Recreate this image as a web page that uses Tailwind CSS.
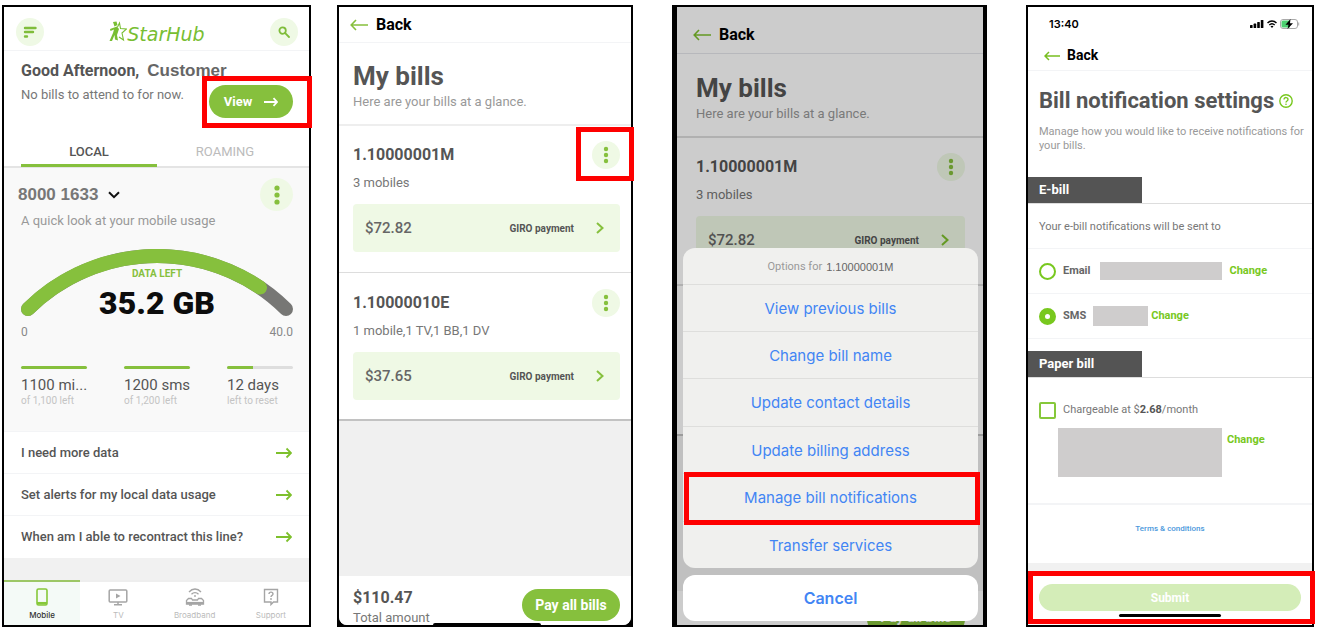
<!DOCTYPE html>
<html lang="en">
<head>
  <meta charset="UTF-8" />
  <title>StarHub App – Manage bill notifications</title>
  <meta name="viewport" content="width=device-width, initial-scale=1.0" />
  <script src="https://cdn.jsdelivr.net/npm/@tailwindcss/browser@4"></script>
</head>
<body class="bg-white font-['Roboto',sans-serif] text-[#555]">

  <main class="min-h-screen pt-[5px] pb-[5px] pl-[2px] pr-1 grid grid-cols-[309fr_26fr_296fr_39fr_315fr_39fr_288fr]">

    <!-- Step 1: Home -->
    <section class="col-start-1 border-2 border-black bg-white flex flex-col">
      <header class="h-11 pl-3 pr-[11px] pt-1.5 flex items-center justify-between border-b border-gray-100">
        <button aria-label="Menu" class="size-7 rounded-full bg-[#eff9e5] flex items-center justify-center">
          <svg class="w-[14px] h-3" viewBox="0 0 14 12" fill="none" stroke="#7fbd3a" stroke-width="2.4" stroke-linecap="round"><path d="M2 2h10.500M2 6h8M2 10.500h2" /></svg>
        </button>
        <div class="flex items-center text-[#78be32]">
          <svg class="w-[18px] h-[21px]" viewBox="0 0 18 21" fill="none" stroke="currentColor">
            <path d="M4 1l3.500-.5 1 3.500-3 1.500z" fill="currentColor" stroke="none" />
            <path d="M1 8l7-2.500L10 8l-2 6 1 5.500-3-1L5.500 14 3 20H.5L4 12 5 8.500 1.500 10z" fill="currentColor" stroke="none" />
            <path d="M8.500 6L10.500 2l1 5.500 6 .5-4.500 4 1.500 7-4.500-3" stroke-width="1.100" />
          </svg>
          <span class="pt-1 font-['DejaVu_Sans',sans-serif] italic text-[19px] leading-5">StarHub</span>
        </div>
        <button aria-label="Search" class="size-7 rounded-full bg-[#eff9e5] flex items-center justify-center">
          <svg class="size-3" viewBox="0 0 12 12" fill="none" stroke="#7fbd3a" stroke-width="1.8" stroke-linecap="round"><circle cx="4.6" cy="4.6" r="3.2" /><path d="M7.2 7.2l3.8 3.8" /></svg>
        </button>
      </header>

      <div class="pl-[17px] pr-4 pt-2">
        <h1 class="text-[16px] leading-6 font-bold flex items-center gap-2">Good Afternoon, <span class="font-['Liberation_Sans',sans-serif] text-[17px] text-[#666]">Customer</span></h1>
        <div class="flex justify-between">
          <p class="text-[13px] leading-6 text-[#777]">No bills to attend to for now.</p>
          <div class="relative mt-0.5">
            <button class="h-[33px] w-[84px] rounded-full bg-[#86c03d] text-white font-bold text-[13px] flex items-center justify-center gap-3">
              View
              <svg class="w-[14px] h-2.5" viewBox="0 0 14 10" fill="none" stroke="currentColor" stroke-width="1.8"><path d="M0 5h13M9.5 1.2L13 5 9.5 8.8" /></svg>
            </button>
            <div class="absolute -top-[9px] -bottom-[10px] -left-[7px] -right-[19px] border-[5px] border-[#fe0000]"></div>
          </div>
        </div>
      </div>

      <nav class="mt-[18px] pl-[17px] pr-4 grid grid-cols-2 border-b-2 border-[#e4e4e4] text-[13px] leading-5">
        <button class="pt-1.5 pb-0.5 -mb-px border-b-3 border-[#86c03d] font-medium">LOCAL</button>
        <button class="pt-1.5 pb-1 text-[#bbb]">ROAMING</button>
      </nav>

      <div class="bg-[#f9f9f9] pl-[17px] pr-4 pt-2.5 pb-6">
        <div class="flex items-center justify-between">
          <button class="-ml-[3px] flex items-center gap-2.5 font-['Liberation_Sans',sans-serif] font-bold text-[17px] leading-6 text-[#777]">
            8000 1633
            <svg class="w-3 h-2" viewBox="0 0 12 8" fill="none" stroke="#111" stroke-width="2"><path d="M1 1.2l5 5 5-5" /></svg>
          </button>
          <button aria-label="Line options" class="size-[33px] rounded-full bg-[#eff9e5] flex items-center justify-center">
            <svg class="w-1.5 h-5" viewBox="0 0 6 20" fill="#86c03d"><circle cx="3" cy="3" r="2.6" /><circle cx="3" cy="10" r="2.6" /><circle cx="3" cy="17" r="2.6" /></svg>
          </button>
        </div>
        <p class="text-[13px] leading-5 text-[#999]">A quick look at your mobile usage</p>

        <!-- Data gauge -->
        <div class="relative mt-[18px]">
          <svg class="w-full" viewBox="0 0 272 67" fill="none" stroke-width="14" stroke-linecap="round">
            <path d="M7 60A183.5 183.5 0 0 1 265 60" stroke="#777775" />
            <path d="M7 60A183.5 183.5 0 0 1 239 38.500" stroke="#86c03d" />
          </svg>
          <div class="absolute inset-x-0 top-[18px] text-center">
            <p class="text-[10px] leading-[14px] font-bold text-[#86c03d]">DATA LEFT</p>
            <p class="mt-1 text-[32px] leading-9 font-black text-[#0d0d0d]">35.2 GB</p>
          </div>
        </div>
        <div class="mt-1.5 flex justify-between text-[12px] leading-5 text-[#888]"><span>0</span><span>40.0</span></div>

        <div class="mt-6 grid grid-cols-3 gap-[37px] whitespace-nowrap">
          <div>
            <div class="h-[3px] rounded-full bg-[#86c03d]"></div>
            <p class="mt-1.5 text-[15px] leading-5">1100 mi...</p>
            <p class="text-[10px] leading-3 text-[#c4c4c4]">of 1,100 left</p>
          </div>
          <div>
            <div class="h-[3px] rounded-full bg-[#86c03d]"></div>
            <p class="mt-1.5 text-[15px] leading-5">1200 sms</p>
            <p class="text-[10px] leading-3 text-[#c4c4c4]">of 1,200 left</p>
          </div>
          <div>
            <div class="h-[3px] rounded-full bg-[#dedede]"><div class="h-[3px] rounded-l-full bg-[#86c03d]" style="width: 40%"></div></div>
            <p class="mt-1.5 text-[15px] leading-5">12 days</p>
            <p class="text-[10px] leading-3 text-[#c4c4c4]">left to reset</p>
          </div>
        </div>
      </div>

      <div class="text-[13px] font-medium divide-y divide-gray-100 border-t border-gray-100">
        <a href="#" class="h-[42px] pl-[17px] pr-[17px] flex items-center justify-between">I need more data
          <svg class="w-4 h-3" viewBox="0 0 16 12" fill="none" stroke="#7dc02c" stroke-width="1.8"><path d="M0 6h15M10.500 1.500L15 6l-4.500 4.500" /></svg>
        </a>
        <a href="#" class="h-[42px] pl-[17px] pr-[17px] flex items-center justify-between">Set alerts for my local data usage
          <svg class="w-4 h-3" viewBox="0 0 16 12" fill="none" stroke="#7dc02c" stroke-width="1.8"><path d="M0 6h15M10.500 1.500L15 6l-4.500 4.500" /></svg>
        </a>
        <a href="#" class="h-[42px] pl-[17px] pr-[17px] flex items-center justify-between">When am I able to recontract this line?
          <svg class="w-4 h-3" viewBox="0 0 16 12" fill="none" stroke="#7dc02c" stroke-width="1.8"><path d="M0 6h15M10.500 1.500L15 6l-4.500 4.500" /></svg>
        </a>
      </div>
      <div class="flex-1 bg-[#f1f1f1]"></div>

      <nav class="grid grid-cols-4 font-['Inter',sans-serif] text-[8px] leading-[10px] text-[#bbb]">
        <a href="#" class="h-[45px] border-t-2 border-[#9cc766] bg-[#f4faf7] flex flex-col items-center pt-1.5 gap-1 font-medium text-[#333]">
          <svg class="w-5 h-[18px]" viewBox="0 0 20 18" fill="none" stroke="#86c83a" stroke-width="1.6"><rect x="5" y="1" width="10" height="16" rx="1.500" /><path d="M5 15.200h10" stroke-width="2.500" /></svg>
          Mobile
        </a>
        <a href="#" class="h-[45px] border-t-2 border-[#eee] flex flex-col items-center pt-1.5 gap-1">
          <svg class="w-5 h-[18px]" viewBox="0 0 20 18" fill="none" stroke="#a5a5a5" stroke-width="1.500"><rect x="1.200" y="2" width="17.600" height="12" rx="1" /><path d="M10 14v2.500M6 16.800h8" /><path d="M8 5.500l4.500 2.500L8 10.500z" fill="#a5a5a5" stroke="none" /></svg>
          TV
        </a>
        <a href="#" class="h-[45px] border-t-2 border-[#eee] flex flex-col items-center pt-1.5 gap-1">
          <svg class="w-5 h-[18px]" viewBox="0 0 20 18" fill="none" stroke="#a5a5a5" stroke-width="1.300"><path d="M4 4c3.500-4 8.500-4 12 0M6.500 6.300c2-2.200 5-2.200 7 0" /><circle cx="10" cy="8" r=".9" fill="#a5a5a5" stroke="none" /><path d="M3.500 10.500h3l1 1.500h5l1-1.500h3l2 2v3.500H1.500v-3.500z" /><path d="M2 15h16" stroke-width="2.200" /><path d="M4 17h3M13 17h3" /></svg>
          Broadband
        </a>
        <a href="#" class="h-[45px] border-t-2 border-[#eee] flex flex-col items-center pt-1.5 gap-1">
          <svg class="w-5 h-[18px]" viewBox="0 0 20 18" fill="none" stroke="#a5a5a5" stroke-width="1.400"><path d="M3.500 1.500h13v12.500h-4L10 16.500V14H3.500z" /><path d="M8 6c0-2.500 4-2.500 4 0 0 1.500-2 1.300-2 3" /><circle cx="10" cy="11" r=".9" fill="#a5a5a5" stroke="none" /></svg>
          Support
        </a>
      </nav>
    </section>

    <!-- Step 2: My bills -->
    <section class="col-start-3 border-2 border-black bg-black flex flex-col">
      <div class="relative flex-1 bg-[#f0f0f0] rounded-b-lg flex flex-col">
        <div class="bg-white border-b-2 border-[#c2c2c2]">
          <a href="#" class="h-9 px-[11px] flex items-center gap-2 text-[16px] font-bold text-black border-b border-gray-100">
            <svg class="w-[18px] h-3" viewBox="0 0 18 12" fill="none" stroke="#86c03d" stroke-width="1.600"><path d="M18 6H1.500M6 1L1.200 6 6 11" /></svg>
            Back
          </a>
          <div class="pl-3.5 pt-[17px] pb-3 border-b-2 border-[#eee]">
            <h2 class="text-[26px] leading-8 font-bold">My bills</h2>
            <p class="text-[13px] leading-5 text-[#999]">Here are your bills at a glance.</p>
          </div>
          <div class="pl-3.5 pr-[11px] pt-[15px] pb-5 border-b border-[#ddd]">
            <div class="flex items-center justify-between">
              <h3 class="text-[16px] leading-7 font-bold">1.10000001M</h3>
              <div class="relative">
                <button aria-label="Options for 1.10000001M" class="size-7 rounded-full bg-[#eff9e5] flex items-center justify-center">
                  <svg class="w-1.5 h-[18px]" viewBox="0 0 6 18" fill="#86c03d"><circle cx="3" cy="3" r="2.200" /><circle cx="3" cy="9" r="2.200" /><circle cx="3" cy="15" r="2.200" /></svg>
                </button>
                <div class="absolute -top-[14px] -bottom-3 -left-4 -right-[14px] border-[5px] border-[#fe0000]"></div>
              </div>
            </div>
            <p class="mt-1 text-[13px] leading-5 text-[#777]">3 mobiles</p>
            <a href="#" class="mt-[11px] h-12 rounded px-3 bg-[#eff9e5] flex items-center">
              <span class="flex-1 text-[15px] font-medium text-[#666]">$72.82</span>
              <span class="text-[10px] font-bold">GIRO payment</span>
              <svg class="ml-[22px] mr-1 w-2 h-3" viewBox="0 0 8 12" fill="none" stroke="#86c03d" stroke-width="2"><path d="M1 1l5.500 5L1 11" /></svg>
            </a>
          </div>
          <div class="pl-3.5 pr-[11px] pt-4 pb-[19px]">
            <div class="flex items-center justify-between">
              <h3 class="text-[16px] leading-7 font-bold">1.10000010E</h3>
              <button aria-label="Options for 1.10000010E" class="size-7 rounded-full bg-[#eff9e5] flex items-center justify-center">
                <svg class="w-1.5 h-[18px]" viewBox="0 0 6 18" fill="#86c03d"><circle cx="3" cy="3" r="2.200" /><circle cx="3" cy="9" r="2.200" /><circle cx="3" cy="15" r="2.200" /></svg>
              </button>
            </div>
            <p class="mt-1 text-[13px] leading-5 text-[#777]">1 mobile,1 TV,1 BB,1 DV</p>
            <a href="#" class="mt-[11px] h-12 rounded px-3 bg-[#eff9e5] flex items-center">
              <span class="flex-1 text-[15px] font-medium text-[#666]">$37.65</span>
              <span class="text-[10px] font-bold">GIRO payment</span>
              <svg class="ml-[22px] mr-1 w-2 h-3" viewBox="0 0 8 12" fill="none" stroke="#86c03d" stroke-width="2"><path d="M1 1l5.500 5L1 11" /></svg>
            </a>
          </div>
        </div>
        <div class="flex-1"></div>
        <footer class="bg-white rounded-b-lg pl-3.5 pr-[11px] pt-3 flex items-start justify-between">
          <div class="-mb-1">
            <p class="text-[16px] leading-5 font-bold">$110.47</p>
            <p class="text-[13px] leading-5 text-[#777]">Total amount</p>
          </div>
          <button class="mt-px mb-1 h-8 w-[98px] rounded-full bg-[#86c03d] text-white text-[14px] font-bold">Pay all bills</button>
        </footer>
        <div class="absolute bottom-0 left-1/2 -ml-[52px] w-[108px] h-0.5 rounded-t bg-black"></div>
      </div>
    </section>

    <!-- Step 3: Bill options sheet -->
    <section class="col-start-5 border-y-2 border-l-5 border-r-4 border-black bg-[#f0f0f0] relative overflow-hidden">
      <div class="absolute inset-0 flex flex-col">
        <div class="bg-white border-b-2 border-[#c2c2c2]">
          <a href="#" class="h-[47px] pt-2.5 px-4 flex items-center gap-2 text-[16px] font-bold text-black border-b border-gray-200">
            <svg class="w-[18px] h-3" viewBox="0 0 18 12" fill="none" stroke="#7dc02c" stroke-width="1.600"><path d="M18 6H1.500M6 1L1.200 6 6 11" /></svg>
            Back
          </a>
          <div class="pl-[19px] pt-[18px] pb-3 border-b-2 border-[#ddd]">
            <h2 class="text-[26px] leading-8 font-bold">My bills</h2>
            <p class="text-[13px] leading-5 text-[#999]">Here are your bills at a glance.</p>
          </div>
          <div class="pl-[19px] pr-[18px] pt-[15px] pb-5 border-b-2 border-[#ddd]">
            <div class="flex items-center justify-between">
              <h3 class="text-[16px] leading-7 font-bold">1.10000001M</h3>
              <button aria-label="Options for 1.10000001M" class="size-7 rounded-full bg-[#eff9e5] flex items-center justify-center">
                <svg class="w-1.5 h-[18px]" viewBox="0 0 6 18" fill="#86c03d"><circle cx="3" cy="3" r="2.200" /><circle cx="3" cy="9" r="2.200" /><circle cx="3" cy="15" r="2.200" /></svg>
              </button>
            </div>
            <p class="mt-1 text-[13px] leading-5 text-[#777]">3 mobiles</p>
            <a href="#" class="mt-[11px] h-12 rounded px-3 bg-[#eff9e5] flex items-center">
              <span class="flex-1 text-[15px] font-medium text-[#666]">$72.82</span>
              <span class="text-[10px] font-bold">GIRO payment</span>
              <svg class="ml-[22px] mr-1 w-2 h-3" viewBox="0 0 8 12" fill="none" stroke="#7dc02c" stroke-width="2"><path d="M1 1l5.500 5L1 11" /></svg>
            </a>
          </div>
          <div class="h-[148px]"></div>
        </div>
        <div class="flex-1"></div>
        <footer class="h-[34px] bg-white pr-[18px] flex justify-end items-start overflow-hidden">
          <button class="mt-3 h-8 shrink-0 w-[98px] rounded-full bg-[#86c03d] text-white text-[14px] leading-4 font-bold flex justify-center pt-1.5">Pay all bills</button>
        </footer>
      </div>
      <div class="absolute inset-0 bg-black/20"></div>

      <div class="absolute bottom-1 left-1.5 right-[5px] font-['Inter',sans-serif] text-[15px] text-[#4285f4]">
        <div class="rounded-xl bg-[#f0f0ee] divide-y divide-[#dededc]">
          <p class="h-[37px] pt-0.5 flex items-center justify-center gap-1 font-['Roboto',sans-serif] text-[11px] text-[#999]">Options for <span class="font-['Liberation_Sans',sans-serif] text-[#666]">1.10000001M</span></p>
          <button class="block w-full h-[47px] pt-0.5">View previous bills</button>
          <button class="block w-full h-[47px] pt-0.5">Change bill name</button>
          <button class="block w-full h-[48px] pt-0.5">Update contact details</button>
          <button class="block w-full h-[47px] pt-0.5">Update billing address</button>
          <div class="relative">
            <button class="block w-full h-[47px] pt-0.5">Manage bill notifications</button>
            <div class="absolute -top-0.5 -bottom-1 left-px -right-0.5 z-10 border-[5px] border-[#fe0000]"></div>
          </div>
          <button class="block w-full h-[46px] pt-0.5">Transfer services</button>
        </div>
        <button class="mt-[7px] block w-full h-[46px] rounded-xl bg-white text-[16px] font-semibold">Cancel</button>
      </div>
    </section>

    <!-- Step 4: Bill notification settings -->
    <section class="col-start-7 border-2 border-black bg-white flex flex-col text-[11px]">
      <div class="h-8 pt-0.5 pl-[21px] pr-3 flex items-center gap-[3px] text-black">
        <span class="flex-1 font-['Inter',sans-serif] font-semibold">13:40</span>
        <svg class="w-[14px] h-2" viewBox="0 0 14 8" fill="currentColor"><rect y="5" width="2.600" height="3" rx=".6" /><rect x="3.600" y="3.600" width="2.600" height="4.400" rx=".6" /><rect x="7.200" y="2" width="2.600" height="6" rx=".6" /><rect x="10.800" width="2.600" height="8" rx=".6" /></svg>
        <svg class="w-2.5 h-2" viewBox="0 0 10 8" fill="none" stroke="currentColor" stroke-width="1.500"><path d="M.5 3c2.600-2.600 6.400-2.600 9 0M2.300 5c1.600-1.500 3.800-1.500 5.400 0" /><path d="M3.500 6.300L5 8l1.500-1.700c-.8-.7-2.200-.7-3 0z" fill="currentColor" stroke="none" /></svg>
        <svg class="w-5 h-2.5" viewBox="0 0 20 10"><rect x=".5" y=".5" width="17" height="9" rx="2.500" fill="#fff" stroke="#aaa" /><path d="M3 1.500h7v7H3a1.500 1.500 0 0 1-1.500-1.500V3A1.500 1.500 0 0 1 3 1.500z" fill="#4cd070" /><path d="M10.500 0L5.500 5.700h3L7.500 10l5.500-5.700h-3z" fill="#000" /><path d="M18.700 3.500v3" stroke="#aaa" /></svg>
      </div>
      <a href="#" class="h-8 pt-0.5 px-4 flex items-center gap-[7px] text-[14px] font-bold text-black border-b border-gray-100">
        <svg class="w-4 h-2.5" viewBox="0 0 16 10" fill="none" stroke="#78be20" stroke-width="1.500"><path d="M16 5H1.200M5 1L1 5l4 4" /></svg>
        Back
      </a>
      <div class="pl-[11px] pr-2 pt-4">
        <h2 class="text-[22px] leading-7 font-bold flex items-center gap-[5px] whitespace-nowrap">Bill notification settings
          <svg class="size-3.5" viewBox="0 0 14 14" fill="none" stroke="#78c81e" stroke-width="1.400"><circle cx="7" cy="7" r="6.200" /><path d="M5 5.600c0-2.800 4-2.600 4 0 0 1.400-2 1.400-2 2.800" /><circle cx="7" cy="10.200" r=".8" fill="#78c81e" stroke="none" /></svg>
        </h2>
        <p class="mt-2.5 leading-[14px] text-[#999]">Manage how you would like to receive notifications for your bills.</p>
      </div>

      <h3 class="mt-6 border-b border-[#ddd] text-[13px] leading-[26px] font-bold text-white"><span class="block w-2/5 pl-[11px] bg-[#545454]">E-bill</span></h3>
      <p class="h-[45px] px-[11px] pt-0.5 flex items-center text-[#777] border-b border-gray-100">Your e-bill notifications will be sent to</p>
      <div class="h-[45px] px-[11px] flex items-center border-b border-gray-100 text-[11px] font-bold text-[#666]">
        <input type="radio" name="ebill" id="email" class="appearance-none size-[17px] rounded-full border-2 border-[#78c81e] checked:border-6" />
        <label for="email" class="ml-[7px]">Email</label>
        <span class="ml-2.5 w-[122px] h-[18px] bg-[#cfcdcd]"></span>
        <a href="#" class="ml-[7px] text-[#78c81e]">Change</a>
      </div>
      <div class="h-[45px] px-[11px] flex items-center border-b border-gray-100 text-[11px] font-bold text-[#666]">
        <input type="radio" name="ebill" id="sms" checked class="appearance-none size-[17px] rounded-full border-2 border-[#78c81e] checked:border-6" />
        <label for="sms" class="ml-[7px]">SMS</label>
        <span class="ml-[7px] w-[55px] h-5 bg-[#cfcdcd]"></span>
        <a href="#" class="ml-[3px] text-[#78c81e]">Change</a>
      </div>

      <h3 class="mt-3 border-b border-[#ddd] text-[13px] leading-[26px] font-bold text-white"><span class="block w-2/5 pl-[11px] bg-[#545454]">Paper bill</span></h3>
      <div class="px-[11px] pt-6 pb-[26px] border-b-2 border-gray-100">
        <div class="flex items-center">
          <input type="checkbox" id="paper" class="appearance-none size-[17px] rounded-xs border-2 border-[#86c83a] checked:bg-[#86c83a]" />
          <label for="paper" class="ml-[7px] text-[#777]">Chargeable at $<b class="text-[#555]">2.68</b>/month</label>
        </div>
        <div class="mt-[9px] ml-[19px] flex">
          <span class="w-[164px] h-[49px] bg-[#cfcdcd]"></span>
          <a href="#" class="ml-[5px] mt-1 font-bold text-[#78c81e]">Change</a>
        </div>
      </div>
      <p class="pt-4 text-center text-[8px] leading-4 font-medium"><a href="#" class="text-[#4a98dc]">Terms &amp; conditions</a></p>
      <div class="flex-1"></div>
      <div class="h-3 bg-[#f1f1f1]"></div>
      <footer class="relative h-[50px] px-[11px] pt-[9px]">
        <button disabled class="block w-full h-[27px] rounded-full bg-[#d4edb8] text-white text-[12px] font-bold">Submit</button>
        <div class="mt-[3px] mx-auto w-[102px] h-[3px] rounded-full bg-black"></div>
        <div class="absolute -top-1 bottom-px left-0 -right-[3px] border-[5px] border-[#fe0000]"></div>
      </footer>
    </section>

  </main>
</body>
</html>
